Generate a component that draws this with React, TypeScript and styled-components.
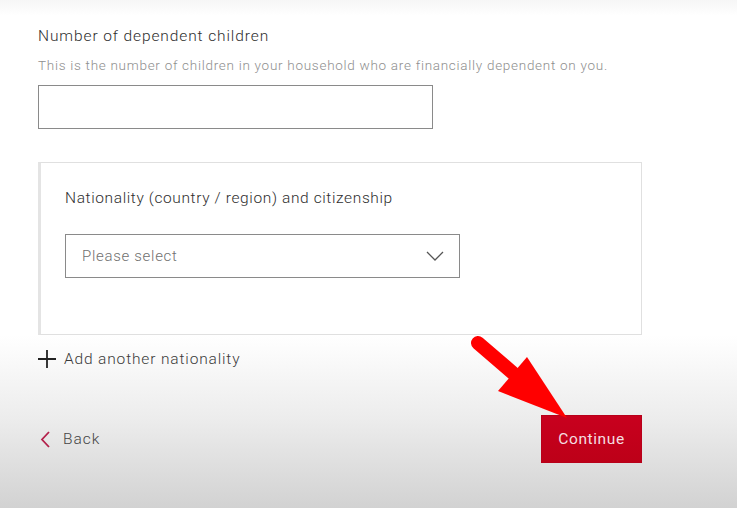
import React from 'react';
import styled, {createGlobalStyle} from 'styled-components';

const GlobalStyle = createGlobalStyle`
    html, body {
      margin: 0;
      padding: 0;
    }
    body {
      font-family: Roboto, "Liberation Sans", Arial, sans-serif;
      font-weight: 300;
      color: #333;
    }
`

const Page = styled.div`
    position: relative;
    width: 737px;
    height: 508px;
    overflow: hidden;
    box-sizing: border-box;
    padding: 27px 0 0 38px;
    background: linear-gradient(180deg, #f6f6f6 0px, #ffffff 16px, #ffffff 335px, #ececec 420px, #d2d2d2 508px);
`

const Label = styled.div<{ spacing?: number }>`
    font-size: 15.5px;
    line-height: 18px;
    letter-spacing: ${({spacing}) => spacing ?? 0.9}px;
    color: #2e2e2e;
`

const Hint = styled.div`
    margin-top: 13px;
    font-size: 13.5px;
    line-height: 15px;
    letter-spacing: 0.72px;
    color: #8e8e8e;
`

const TextInput = styled.div`
    margin-top: 12px;
    width: 395px;
    height: 44px;
    box-sizing: border-box;
    border: 1px solid #8a8a8a;
    background: #fff;
`

const Panel = styled.div`
    margin-top: 33px;
    width: 604px;
    height: 173px;
    box-sizing: border-box;
    border: 1px solid #e0e0e0;
    border-left: 3px solid #e4e4e4;
    background: #fff;
    padding: 26px 0 0 24px;
`

const Select = styled.div`
    margin-top: 27px;
    width: 395px;
    height: 44px;
    box-sizing: border-box;
    border: 1px solid #8a8a8a;
    display: flex;
    align-items: center;
    justify-content: space-between;
    padding: 0 15px 0 16px;
    color: #707070;
    font-size: 15px;
    letter-spacing: 0.7px;
`

const AddLink = styled.div`
    margin-top: 15px;
    display: flex;
    align-items: center;
    gap: 8px;
    font-size: 15.5px;
    letter-spacing: 0.85px;
    color: #3a3a3a;
`

const Footer = styled.div`
    margin-top: 47px;
    width: 604px;
    display: flex;
    align-items: center;
    justify-content: space-between;
`

const BackLink = styled.div`
    display: flex;
    align-items: center;
    gap: 13px;
    padding-left: 2px;
    font-size: 15.5px;
    letter-spacing: 1px;
    color: #444;
`

const ContinueButton = styled.div`
    width: 101px;
    height: 48px;
    box-sizing: border-box;
    border: 1px solid #b8001a;
    background: linear-gradient(180deg, #c8001e, #bd0018);
    color: #f4dde0;
    font-size: 15.5px;
    font-weight: 400;
    letter-spacing: 0.6px;
    display: flex;
    align-items: center;
    justify-content: center;
`

const ArrowOverlay = styled.svg`
    position: absolute;
    left: 0;
    top: 0;
    pointer-events: none;
`

const Chevron = ({color, dir}: {color: string, dir: 'down' | 'left'}) => dir === 'down'
    ? <svg width="18" height="10" viewBox="0 0 18 10"><path d="M1 1 L9 9 L17 1" fill="none" stroke={color} strokeWidth="1.3"/></svg>
    : <svg width="10" height="17" viewBox="0 0 10 17"><path d="M9 1 L2 8.5 L9 16" fill="none" stroke={color} strokeWidth="1.8"/></svg>

export default function App() {
    return <Page>
        <GlobalStyle/>
        <Label>Number of dependent children</Label>
        <Hint>This is the number of children in your household who are financially dependent on you.</Hint>
        <TextInput/>
        <Panel>
            <Label spacing={0.62}>Nationality (country / region) and citizenship</Label>
            <Select>
                <span>Please select</span>
                <Chevron color="#555" dir="down"/>
            </Select>
        </Panel>
        <AddLink>
            <svg width="18" height="18" viewBox="0 0 18 18">
                <path d="M9 0 V18 M0 9 H18" stroke="#222" strokeWidth="1.8"/>
            </svg>
            <span>Add another nationality</span>
        </AddLink>
        <Footer>
            <BackLink>
                <Chevron color="#b3204a" dir="left"/>
                <span>Back</span>
            </BackLink>
            <ContinueButton>Continue</ContinueButton>
        </Footer>
        <ArrowOverlay width="737" height="508" viewBox="0 0 737 508">
            <path d="M478 343 L514 374" stroke="#ff0000" strokeWidth="14" strokeLinecap="round"/>
            <polygon points="498,391 527,357 567,418" fill="#ff0000"/>
        </ArrowOverlay>
    </Page>
}
